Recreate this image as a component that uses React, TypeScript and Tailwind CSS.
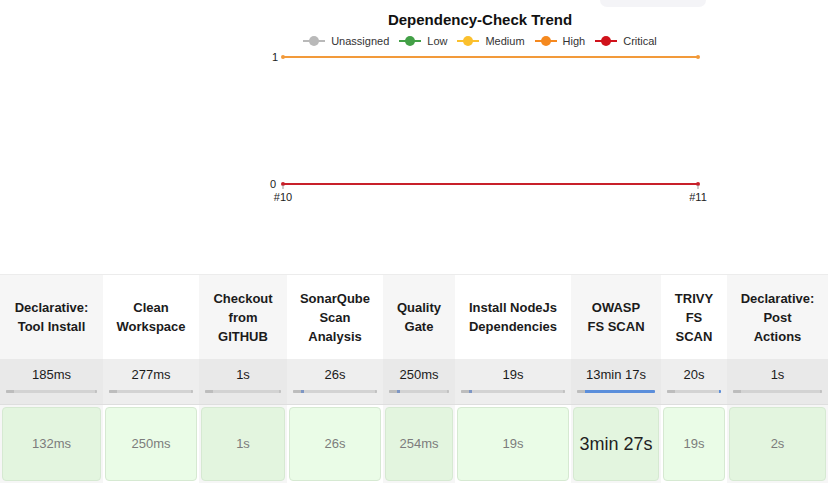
import React from 'react';

type Stage = {
    name: string[];
    w: string;
    avg: string;
    run: string;
    shade: boolean;
    big?: boolean;
    bar: 'none' | 'start' | 'full' | 'end';
};

const stages: Stage[] = [
    { name: ['Declarative:', 'Tool Install'], w: 'w-[103px]', avg: '185ms', run: '132ms', shade: true, bar: 'none' },
    { name: ['Clean', 'Workspace'], w: 'w-[96px]', avg: '277ms', run: '250ms', shade: false, bar: 'none' },
    { name: ['Checkout', 'from', 'GITHUB'], w: 'w-[88px]', avg: '1s', run: '1s', shade: true, bar: 'none' },
    { name: ['SonarQube', 'Scan', 'Analysis'], w: 'w-[96px]', avg: '26s', run: '26s', shade: false, bar: 'start' },
    { name: ['Quality', 'Gate'], w: 'w-[72px]', avg: '250ms', run: '254ms', shade: true, bar: 'start' },
    { name: ['Install NodeJs', 'Dependencies'], w: 'w-[116px]', avg: '19s', run: '19s', shade: false, bar: 'start' },
    { name: ['OWASP', 'FS SCAN'], w: 'w-[90px]', avg: '13min 17s', run: '3min 27s', shade: true, big: true, bar: 'full' },
    { name: ['TRIVY', 'FS', 'SCAN'], w: 'w-[66px]', avg: '20s', run: '19s', shade: false, bar: 'end' },
    { name: ['Declarative:', 'Post', 'Actions'], w: 'w-[101px]', avg: '1s', run: '2s', shade: true, bar: 'none' },
];

const legend = [
    { label: 'Unassigned', color: '#b9b9b9' },
    { label: 'Low', color: '#43a047' },
    { label: 'Medium', color: '#fbc02d' },
    { label: 'High', color: '#f5891f' },
    { label: 'Critical', color: '#d0121b' },
];

function Bar({ kind }: { kind: Stage['bar'] }) {
    return (
        <div className="mx-[6px] flex h-[3px] overflow-hidden rounded-[1px] bg-[#d3d3d3]">
            <div className="h-full w-[8px] bg-[#bdbdbd]" />
            {kind === 'start' && <div className="h-full w-[3px] bg-[#7d96c4]" />}
            {kind === 'full' && <div className="h-full flex-1 bg-[#5b8edb]" />}
            {kind !== 'full' && <div className="flex-1" />}
            {kind === 'end' && <div className="h-full w-[2px] bg-[#5b8edb]" />}
            {kind !== 'full' && kind !== 'end' && <div className="h-full w-[2px] bg-[#c2c2c2]" />}
        </div>
    );
}

export default function App() {
    return (
        <div className="h-[484px] w-[828px] overflow-hidden bg-white font-['Liberation_Sans',Arial,sans-serif] text-[#222]">
            <div className="ml-[600px] h-[7px] w-[106px] rounded-b-[8px] bg-[#f4f4f7]" />
            <div className="pl-[132px]">
                <div className="mt-[3px] h-[20px] text-center text-[15px] font-bold leading-[20px] text-[#111]">Dependency-Check Trend</div>
                <div className="mt-[3px] flex h-[16px] items-center justify-center gap-[10px] text-[11px] text-[#333]">
                    {legend.map((l) => (
                        <div key={l.label} className="flex items-center gap-[6px]">
                            <svg width="22" height="12" viewBox="0 0 22 12">
                                <line x1="0" y1="6" x2="22" y2="6" stroke={l.color} strokeWidth="2" />
                                <circle cx="11" cy="6" r="5" fill={l.color} />
                            </svg>
                            <span>{l.label}</span>
                        </div>
                    ))}
                </div>
            </div>
            <svg width="828" height="160" viewBox="0 49 828 160" className="block">
                <text x="272" y="61" fontSize="11" fill="#222" fontFamily="Liberation Sans, Arial, sans-serif">1</text>
                <line x1="283" y1="57" x2="698" y2="57" stroke="#f29a3a" strokeWidth="2" />
                <circle cx="283" cy="57" r="2" fill="#f29a3a" />
                <circle cx="698" cy="57" r="2" fill="#f29a3a" />
                <text x="270" y="188" fontSize="11" fill="#222" fontFamily="Liberation Sans, Arial, sans-serif">0</text>
                <line x1="283" y1="184" x2="698" y2="184" stroke="#c8202a" strokeWidth="2" />
                <circle cx="283" cy="184" r="2" fill="#c8202a" />
                <circle cx="698" cy="184" r="2" fill="#c8202a" />
                <line x1="283" y1="185" x2="283" y2="189" stroke="#999" strokeWidth="1" />
                <line x1="698" y1="185" x2="698" y2="189" stroke="#999" strokeWidth="1" />
                <text x="283" y="201" fontSize="11" textAnchor="middle" fill="#222" fontFamily="Liberation Sans, Arial, sans-serif">#10</text>
                <text x="698" y="201" fontSize="11" textAnchor="middle" fill="#222" fontFamily="Liberation Sans, Arial, sans-serif">#11</text>
            </svg>
            <div className="mt-[65px] flex border-t border-[#ececec]">
                {stages.map((s) => (
                    <div key={s.name.join(' ')} className={`${s.w} flex shrink-0 flex-col ${s.shade ? 'bg-[#f6f6f6]' : 'bg-white'}`}>
                        <div className="flex h-[84px] items-center justify-center text-center text-[13px] font-bold leading-[19px] text-[#1b1b1b]">
                            <div>
                                {s.name.map((n) => (
                                    <div key={n}>{n}</div>
                                ))}
                            </div>
                        </div>
                        <div className={`h-[46px] border-b border-[#dedede] ${s.shade ? 'bg-[#e9e9e9]' : 'bg-[#eeeeee]'}`}>
                            <div className="pt-[8px] text-center text-[13px] leading-[16px] text-[#1b1b1b]">{s.avg}</div>
                            <div className="mt-[7px]">
                                <Bar kind={s.bar} />
                            </div>
                        </div>
                        <div className="flex-1 px-[2px] pb-[2px] pt-[2px]">
                            <div className={`flex h-[74px] items-center justify-center rounded-[4px] border border-[#d6e9d2] ${s.shade ? 'bg-[#e3f5df]' : 'bg-[#eafce7]'} ${s.big ? 'text-[18px] text-[#1f1f1f]' : 'text-[13px] text-[#7c7c7c]'}`}>
                                {s.run}
                            </div>
                        </div>
                    </div>
                ))}
            </div>
        </div>
    );
}
